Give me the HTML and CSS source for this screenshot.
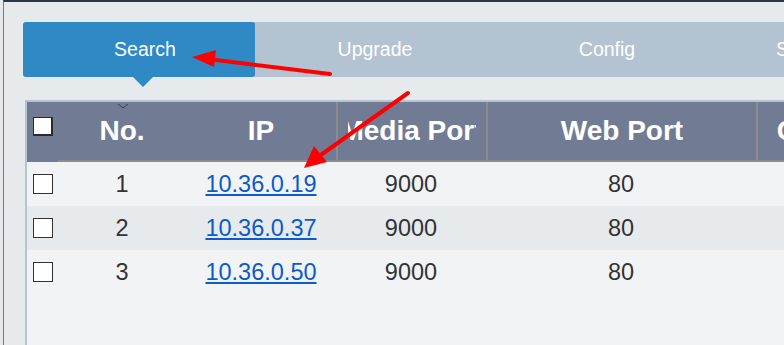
FILE: index.html
```html
<!DOCTYPE html>
<html lang="en">

<head>
    <meta charset="UTF-8">
    <meta name="viewport" content="width=device-width, initial-scale=1.0">
    <title>Device Search</title>
    <link rel="stylesheet" href="styles.css">
</head>

<body>
    <div class="page">
        <ul class="tabs">
            <li class="tab active">Search</li>
            <li class="tab upgrade">Upgrade</li>
            <li class="tab config">Config</li>
            <li class="tab status">Status</li>
        </ul>

        <div class="grid">
            <div class="row head">
                <div class="cell check"><span class="box boxHead"></span></div>
                <div class="cell no">
                    No.
                    <svg class="sort" width="12" height="6" viewBox="0 0 12 6">
                        <polyline points="1,1 6,5 11,1" fill="none" stroke="#3a3f4a" stroke-width="1"/>
                    </svg>
                </div>
                <div class="cell">IP</div>
                <div class="cell sep"><span class="clip">Media Port</span></div>
                <div class="cell sep">Web Port</div>
                <div class="cell sep"><span class="clip">Channel</span></div>
            </div>

            <div class="row odd">
                <div class="cell check"><span class="box"></span></div>
                <div class="cell">1</div>
                <div class="cell"><a href="#">10.36.0.19</a></div>
                <div class="cell">9000</div>
                <div class="cell">80</div>
                <div class="cell"></div>
            </div>
            <div class="row even">
                <div class="cell check"><span class="box"></span></div>
                <div class="cell">2</div>
                <div class="cell"><a href="#">10.36.0.37</a></div>
                <div class="cell">9000</div>
                <div class="cell">80</div>
                <div class="cell"></div>
            </div>
            <div class="row odd">
                <div class="cell check"><span class="box"></span></div>
                <div class="cell">3</div>
                <div class="cell"><a href="#">10.36.0.50</a></div>
                <div class="cell">9000</div>
                <div class="cell">80</div>
                <div class="cell"></div>
            </div>
        </div>

        <!-- red annotation arrows -->
        <svg class="marks" width="784" height="345" viewBox="0 0 784 345">
            <line x1="330" y1="74" x2="208" y2="59" stroke="#f00" stroke-width="4" stroke-linecap="round"/>
            <polygon points="192,57 216,50 214,67" fill="#f00"/>
            <line x1="408" y1="93" x2="318" y2="157" stroke="#f00" stroke-width="4" stroke-linecap="round"/>
            <polygon points="304,168 314,146 327,162" fill="#f00"/>
        </svg>
    </div>
</body>

</html>
```

FILE: styles.css
```css
* {
    padding: 0;
    margin: 0;
    box-sizing: border-box;
}

body {
    background: #e7eaed;
    font-family: "Liberation Sans", Arial, sans-serif;
    overflow: hidden;
    height: 345px;
}

.page {
    position: relative;
    width: 1200px;
    height: 345px;
    margin-left: 3px;
    border-left: 1px solid #7a7a7a;
    border-top: 2px solid #2b3648;
    padding: 20px 0 0 19px;
}

.marks {
    position: absolute;
    left: -4px;
    top: -2px;
    pointer-events: none;
}

.tabs {
    list-style: none;
    display: flex;
    height: 55px;
    background: #b3c3d2;
    border-radius: 3px 0 0 3px;
}

.tabs .tab {
    position: relative;
    display: flex;
    align-items: center;
    justify-content: center;
    width: 231px;
    color: #fff;
    font-size: 19.5px;
}

.tabs .active {
    width: 232px;
    padding-left: 12px;
    background: #2e89c5;
    border-radius: 3px;
}

.tabs .active::after {
    content: "";
    position: absolute;
    left: 110px;
    top: 55px;
    border-left: 10px solid transparent;
    border-right: 10px solid transparent;
    border-top: 10px solid #2e89c5;
}

.tabs .upgrade {
    width: 235px;
    padding-left: 5px;
}

.tabs .config {
    width: 230px;
    padding-left: 4px;
}

.tabs .status {
    justify-content: flex-start;
    padding-left: 56px;
}

.grid {
    margin: 23px 0 0 2px;
    height: 245px;
    background: #f2f3f5;
    border-left: 2px solid #b4c4d3;
    border-top: 2px solid #b4c4d3;
}

.row {
    display: grid;
    grid-template-columns: 31px 128px 150px 150px 270px 150px;
    height: 44px;
    color: #333;
    font-size: 23.5px;
}

.row .cell {
    display: flex;
    align-items: center;
    justify-content: center;
    white-space: nowrap;
}

.odd {
    background: #f2f3f5;
}

.even {
    background: #e7eaed;
}

.head {
    height: 60px;
    background: #717c94;
    color: #fff;
    font-size: 28px;
    font-weight: bold;
}

.head .cell {
    border-bottom: 2px solid #8c8c8c;
}

.head .check {
    border-bottom: none;
    align-items: flex-start;
    padding-top: 15px;
}

.head .sep {
    border-left: 2px solid #8c8c8c;
    padding: 0 10px;
}

.head .no {
    position: relative;
}

.head .sort {
    position: absolute;
    left: 59px;
    top: 1px;
}

.clip {
    display: flex;
    justify-content: center;
    width: 100%;
    overflow: hidden;
}

.box {
    display: block;
    width: 20px;
    height: 20px;
    margin-left: 1px;
    background: #fff;
    border: 1px solid #333;
}

.boxHead {
    height: 19px;
    border-width: 1px 2px 2px 1px;
    border-color: #2a2a2a;
}

.row a {
    color: #0a5bcc;
    text-decoration: underline;
}
```
